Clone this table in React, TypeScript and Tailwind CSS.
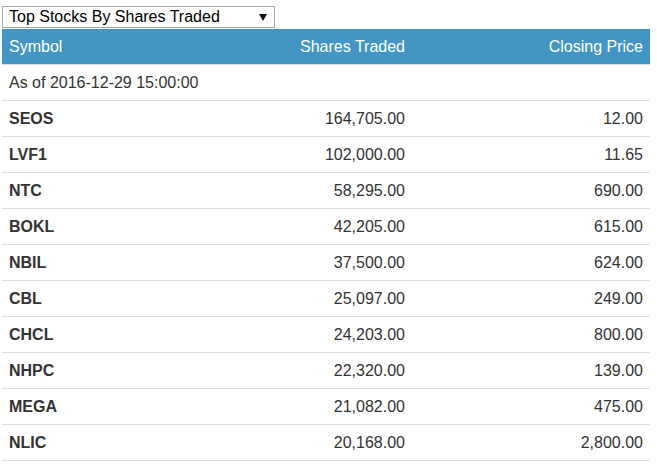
const rows = [
  { symbol: "SEOS", shares: "164,705.00", price: "12.00" },
  { symbol: "LVF1", shares: "102,000.00", price: "11.65" },
  { symbol: "NTC", shares: "58,295.00", price: "690.00" },
  { symbol: "BOKL", shares: "42,205.00", price: "615.00" },
  { symbol: "NBIL", shares: "37,500.00", price: "624.00" },
  { symbol: "CBL", shares: "25,097.00", price: "249.00" },
  { symbol: "CHCL", shares: "24,203.00", price: "800.00" },
  { symbol: "NHPC", shares: "22,320.00", price: "139.00" },
  { symbol: "MEGA", shares: "21,082.00", price: "475.00" },
  { symbol: "NLIC", shares: "20,168.00", price: "2,800.00" },
];

export default function App() {
  return (
    <div className="h-[466px] w-[657px] overflow-hidden bg-white pl-[2px] pt-[6px] font-['Liberation_Sans',Arial,sans-serif] text-[16px] text-[#333]">
      {/* Fake select */}
      <div className="flex h-[22px] w-[273px] items-center justify-between border border-[#a9a9a9] bg-white pl-[6px] pr-[7px] text-black">
        <span className="leading-none">Top Stocks By Shares Traded</span>
        <svg width="8" height="7" viewBox="0 0 8 7" className="mt-[1px]">
          <path d="M0 0 H8 L4 7 Z" fill="#111" />
        </svg>
      </div>

      <div className="mt-[1px] w-[648px]">
        {/* Header */}
        <div className="grid h-[36px] grid-cols-[200px_210px_238px] items-center border-b border-[#ddd] bg-[#4396c4] text-white">
          <div className="px-[7px]">Symbol</div>
          <div className="px-[7px] text-right">Shares Traded</div>
          <div className="px-[7px] text-right">Closing Price</div>
        </div>

        <div className="flex h-[36px] items-center border-b border-[#ddd] px-[7px]">As of 2016-12-29 15:00:00</div>

        {rows.map((r) => (
          <div
            key={r.symbol}
            className="grid h-[36px] grid-cols-[200px_210px_238px] items-center border-b border-[#ddd]"
          >
            <div className="px-[7px] font-bold">{r.symbol}</div>
            <div className="px-[7px] text-right">{r.shares}</div>
            <div className="px-[7px] text-right">{r.price}</div>
          </div>
        ))}
      </div>
    </div>
  );
}
